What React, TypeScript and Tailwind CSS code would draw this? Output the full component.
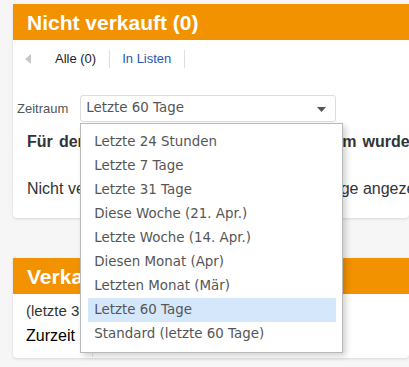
const MENU_ITEMS = [
  "Letzte 24 Stunden",
  "Letzte 7 Tage",
  "Letzte 31 Tage",
  "Diese Woche (21. Apr.)",
  "Letzte Woche (14. Apr.)",
  "Diesen Monat (Apr)",
  "Letzten Monat (Mär)",
  "Letzte 60 Tage",
  "Standard (letzte 60 Tage)",
];

const SELECTED = "Letzte 60 Tage";

function SectionHeader({ title }: { title: string }) {
  return (
    <div className="flex h-[36px] items-center bg-[#f39200] px-[14px]">
      <h2 className="whitespace-nowrap text-[21px] font-bold leading-none text-white">{title}</h2>
    </div>
  );
}

function PeriodSelect() {
  return (
    <div className="relative w-[256px]">
      <div className="flex h-[27px] items-center justify-between rounded-[3px] border border-[#dcdcdc] bg-white pl-[5px] pr-[9px] font-['DejaVu_Sans',sans-serif] text-[13.4px] text-[#555]">
        <span>{SELECTED}</span>
        <svg width="9" height="5" viewBox="0 0 9 5" className="mt-[1px]">
          <path d="M0 0h9L4.5 5z" fill="#555" />
        </svg>
      </div>

      {/* open dropdown list */}
      <ul className="absolute left-0 top-[28px] z-10 w-[263px] border border-[#b9b9b9] bg-white py-[6px] pl-[7px] pr-[6px] shadow-[3px_3px_6px_rgba(0,0,0,0.18)] font-['DejaVu_Sans',sans-serif] text-[13.4px] text-[#555]">
        {MENU_ITEMS.map((item) => (
          <li
            key={item}
            className={`flex h-[24px] items-center whitespace-nowrap pl-[6px] ${
              item === SELECTED ? "bg-[#d5e8fb]" : ""
            }`}
          >
            {item}
          </li>
        ))}
      </ul>
    </div>
  );
}

export default function App() {
  return (
    <div className="h-[367px] w-[409px] overflow-hidden bg-[#f6f6f6] pl-[13px] pt-[4px] font-['Liberation_Sans',Arial,sans-serif]">
      <section className="rounded-b-[4px] bg-white shadow-[0_1px_3px_rgba(0,0,0,0.12)]">
        <SectionHeader title="Nicht verkauft (0)" />

        <div className="flex h-[38px] items-center text-[13px]">
          <svg width="6" height="10" viewBox="0 0 6 10" className="ml-[12px]">
            <path d="M6 0v10L0 5z" fill="#c8c8c8" />
          </svg>
          <span className="ml-[24px] text-[#222]">Alle (0)</span>
          <span className="ml-[13px] h-[18px] w-px bg-[#dedede]" />
          <span className="ml-[12px] text-[#1f59b3]">In Listen</span>
          <span className="ml-[13px] h-[18px] w-px bg-[#dedede]" />
        </div>

        <div className="mt-[17px] flex items-center gap-[12px] pl-[4px]">
          <span className="text-[13px] text-[#555]">Zeitraum</span>
          <PeriodSelect />
        </div>

        <div className="overflow-hidden px-[14px] pb-[20px] pt-[11px] text-[16px] leading-[18px] text-[#333]">
          <p className="whitespace-nowrap font-bold [word-spacing:1.7px]">
            Für den von Ihnen ausgewählten Zeitraum wurden keine Artikel gefunden.
          </p>
          <p className="mt-[29px] whitespace-nowrap">
            Nicht verkaufte Artikel werden hier nur 60 Tage angezeigt.
          </p>
        </div>
      </section>

      <section className="mt-[40px] h-[100px] rounded-b-[4px] bg-white shadow-[0_1px_3px_rgba(0,0,0,0.12)]">
        <SectionHeader title="Verkauft (0)" />
        <div className="flex h-[63px]">
          <div className="flex w-[80px] flex-col border-r border-[#e4e4e4] pl-[13px] pt-[8px]">
            <span className="whitespace-nowrap text-[15px] leading-[17px] text-[#333]">(letzte 31 Tage)</span>
            <span className="mt-[8px] whitespace-nowrap text-[16px] leading-[18px] text-black">Zurzeit</span>
          </div>
        </div>
      </section>
    </div>
  );
}
